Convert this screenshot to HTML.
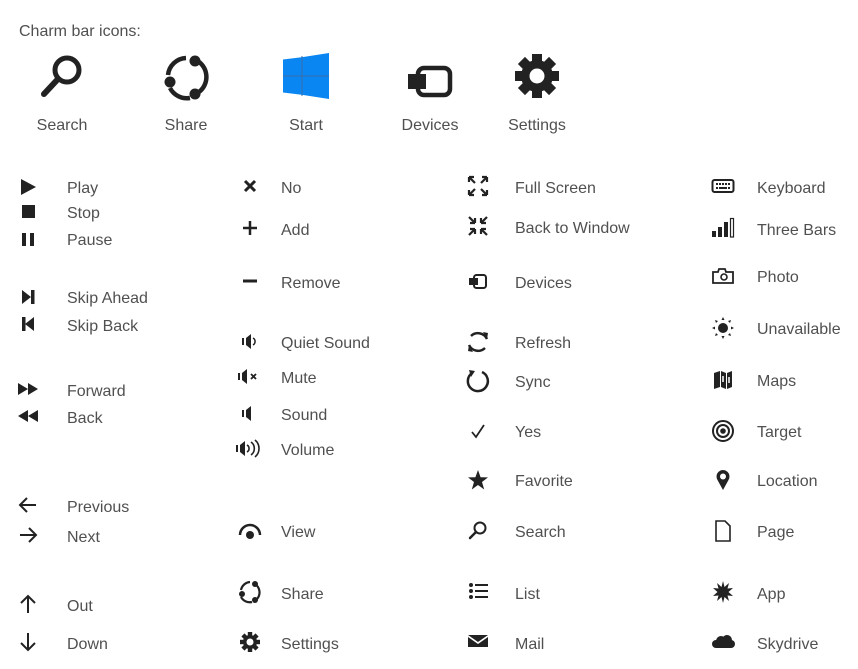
<!DOCTYPE html>
<html><head><meta charset="utf-8"><style>
body{margin:0;width:858px;height:669px;background:#fff;position:relative;overflow:hidden;font-family:"Liberation Sans",sans-serif;color:#505050}
.t{position:absolute;font-size:16px;line-height:20px;white-space:nowrap;margin-top:2px}
.c{position:absolute;font-size:16px;line-height:20px;white-space:nowrap;transform:translateX(-50%);margin-top:1px}
svg{position:absolute;overflow:visible}
.i{width:24px;height:24px}
</style></head><body>
<div class="t" style="left:19px;top:20px">Charm bar icons:</div>

<!-- charm icons -->
<svg style="left:38px;top:52px" width="48" height="48" viewBox="0 0 48 48"><circle cx="29" cy="18" r="12" fill="none" stroke="#222" stroke-width="5"/><line x1="20" y1="27" x2="6" y2="42" stroke="#222" stroke-width="6" stroke-linecap="round"/></svg>
<div class="c" style="left:62px;top:115px">Search</div>
<svg style="left:162px;top:53px" width="48" height="48" viewBox="0 0 48 48"><path d="M34 7 A19 19 0 0 1 37 39" fill="none" stroke="#222" stroke-width="4.5"/><path d="M28 45 A19 19 0 0 1 8 35 M6 22 A19 19 0 0 1 24 5" fill="none" stroke="#222" stroke-width="4.5"/><circle cx="33" cy="8" r="5.5" fill="#222"/><circle cx="8" cy="29" r="5.5" fill="#222"/><circle cx="33" cy="41" r="5.5" fill="#222"/></svg>
<div class="c" style="left:186px;top:115px">Share</div>
<svg style="left:283px;top:53px" width="46" height="46" viewBox="0 0 46 46"><path d="M0 6.5 L18.5 4.3 L18.5 22.5 L0 22.5Z M19.5 4.1 L46 0 L46 22.5 L19.5 22.5Z M0 23.5 L18.5 23.5 L18.5 41.7 L0 39.5Z M19.5 23.5 L46 23.5 L46 46 L19.5 41.9Z" fill="#0a86f3"/><path d="M0 23 H46 M19 3 V43" stroke="#3a6ea8" stroke-width="1"/></svg>
<div class="c" style="left:306px;top:115px">Start</div>
<svg style="left:406px;top:64px" width="48" height="36" viewBox="0 0 48 36"><rect x="12" y="4" width="32" height="27" rx="6" fill="none" stroke="#222" stroke-width="4.5"/><rect x="2" y="10" width="18" height="15" fill="#222"/></svg>
<div class="c" style="left:430px;top:115px">Devices</div>
<svg style="left:514px;top:53px" width="46" height="46" viewBox="-23 -23 46 46"><g fill="#222"><rect x="-5" y="-22" width="10" height="44"/><rect x="-5" y="-22" width="10" height="44" transform="rotate(45)"/><rect x="-5" y="-22" width="10" height="44" transform="rotate(90)"/><rect x="-5" y="-22" width="10" height="44" transform="rotate(135)"/><circle r="16"/></g><circle r="7.5" fill="#fff"/></svg>
<div class="c" style="left:537px;top:115px">Settings</div>

<!-- column 1 -->
<svg class="i" style="left:16px;top:175px" viewBox="0 0 24 24"><path d="M5 4 L20 12 L5 20Z" fill="#222"/></svg><div class="t" style="left:67px;top:177px">Play</div>
<svg class="i" style="left:16px;top:199px" viewBox="0 0 24 24"><rect x="6" y="6" width="13" height="13" fill="#222"/></svg><div class="t" style="left:67px;top:202px">Stop</div>
<svg class="i" style="left:16px;top:227px" viewBox="0 0 24 24"><rect x="6" y="6" width="4" height="13" fill="#222"/><rect x="14" y="6" width="4" height="13" fill="#222"/></svg><div class="t" style="left:67px;top:229px">Pause</div>
<svg class="i" style="left:16px;top:285px" viewBox="0 0 24 24"><path d="M6 5 L15 12 L6 19Z" fill="#222"/><rect x="15" y="5" width="3.5" height="14" fill="#222"/></svg><div class="t" style="left:67px;top:287px">Skip Ahead</div>
<svg class="i" style="left:16px;top:312px" viewBox="0 0 24 24"><path d="M18 5 L9 12 L18 19Z" fill="#222"/><rect x="6" y="5" width="3.5" height="14" fill="#222"/></svg><div class="t" style="left:67px;top:315px">Skip Back</div>
<svg class="i" style="left:16px;top:377px" viewBox="0 0 24 24"><path d="M2 6 L12 12 L2 18Z M12 6 L22 12 L12 18Z" fill="#222"/></svg><div class="t" style="left:67px;top:380px">Forward</div>
<svg class="i" style="left:16px;top:404px" viewBox="0 0 24 24"><path d="M22 6 L12 12 L22 18Z M12 6 L2 12 L12 18Z" fill="#222"/></svg><div class="t" style="left:67px;top:407px">Back</div>
<svg class="i" style="left:16px;top:493px" viewBox="0 0 24 24"><path d="M20 12 H4 M11 5 L4 12 L11 19" fill="none" stroke="#222" stroke-width="2"/></svg><div class="t" style="left:67px;top:496px">Previous</div>
<svg class="i" style="left:16px;top:523px" viewBox="0 0 24 24"><path d="M4 12 H20 M13 5 L20 12 L13 19" fill="none" stroke="#222" stroke-width="2"/></svg><div class="t" style="left:67px;top:526px">Next</div>
<svg class="i" style="left:16px;top:592px" viewBox="0 0 24 24"><path d="M12 21 V4 M5 11 L12 4 L19 11" fill="none" stroke="#222" stroke-width="2"/></svg><div class="t" style="left:67px;top:595px">Out</div>
<svg class="i" style="left:16px;top:630px" viewBox="0 0 24 24"><path d="M12 3 V20 M5 13 L12 20 L19 13" fill="none" stroke="#222" stroke-width="2"/></svg><div class="t" style="left:67px;top:633px">Down</div>

<!-- column 2 -->
<svg class="i" style="left:238px;top:174px" viewBox="0 0 24 24"><path d="M7 7 L17 17 M17 7 L7 17" stroke="#222" stroke-width="3"/></svg><div class="t" style="left:281px;top:177px">No</div>
<svg class="i" style="left:238px;top:216px" viewBox="0 0 24 24"><path d="M12 5 V19 M5 12 H19" stroke="#222" stroke-width="2.5"/></svg><div class="t" style="left:281px;top:219px">Add</div>
<svg class="i" style="left:238px;top:269px" viewBox="0 0 24 24"><path d="M5 12 H19" stroke="#222" stroke-width="3"/></svg><div class="t" style="left:281px;top:272px">Remove</div>
<svg class="i" style="left:238px;top:329px" viewBox="0 0 24 24"><rect x="4" y="9" width="2" height="7" fill="#222"/><path d="M8 9 L13 5 V20 L8 16Z" fill="#222"/><path d="M15 9 A4 4 0 0 1 15 16" fill="none" stroke="#222" stroke-width="1.5"/></svg><div class="t" style="left:281px;top:332px">Quiet Sound</div>
<svg class="i" style="left:238px;top:364px" viewBox="0 0 24 24"><rect x="0" y="9" width="2" height="7" fill="#222"/><path d="M4 9 L9 5 V20 L4 16Z" fill="#222"/><path d="M13 10 L18 15 M18 10 L13 15" stroke="#222" stroke-width="1.8"/></svg><div class="t" style="left:281px;top:367px">Mute</div>
<svg class="i" style="left:238px;top:401px" viewBox="0 0 24 24"><rect x="4" y="9" width="2" height="7" fill="#222"/><path d="M8 9 L13 5 V20 L8 16Z" fill="#222"/></svg><div class="t" style="left:281px;top:404px">Sound</div>
<svg class="i" style="left:238px;top:436px" viewBox="0 0 24 24"><rect x="-2" y="9" width="2" height="7" fill="#222"/><path d="M2 9 L7 5 V20 L2 16Z" fill="#222"/><path d="M9 9 A4 4 0 0 1 9 16 M13 6 A8 8 0 0 1 13 19 M17 4 A11 11 0 0 1 17 21" fill="none" stroke="#222" stroke-width="1.6"/></svg><div class="t" style="left:281px;top:439px">Volume</div>
<svg class="i" style="left:238px;top:518px" viewBox="0 0 24 24"><path d="M2 17 A10 10 0 0 1 22 17" fill="none" stroke="#222" stroke-width="2.5"/><circle cx="12" cy="17" r="4" fill="#222"/></svg><div class="t" style="left:281px;top:521px">View</div>
<svg class="i" style="left:238px;top:580px" viewBox="0 0 24 24"><path d="M17 4 A10 10 0 0 1 19 19 M14 22 A10 10 0 0 1 3 17 M3 10 A10 10 0 0 1 12 2" fill="none" stroke="#222" stroke-width="2.2"/><circle cx="17" cy="4" r="3" fill="#222"/><circle cx="4" cy="14" r="3" fill="#222"/><circle cx="17" cy="20" r="3" fill="#222"/></svg><div class="t" style="left:281px;top:583px">Share</div>
<svg class="i" style="left:238px;top:630px" viewBox="-12 -12 24 24"><g fill="#222"><rect x="-2.2" y="-10" width="4.4" height="20"/><rect x="-2.2" y="-10" width="4.4" height="20" transform="rotate(45)"/><rect x="-2.2" y="-10" width="4.4" height="20" transform="rotate(90)"/><rect x="-2.2" y="-10" width="4.4" height="20" transform="rotate(135)"/><circle r="7"/></g><circle r="3.5" fill="#fff"/></svg><div class="t" style="left:281px;top:633px">Settings</div>

<!-- column 3 -->
<svg class="i" style="left:466px;top:174px" viewBox="0 0 24 24"><path d="M3 3 L9 9 M3 3 H8 M3 3 V8 M21 3 L15 9 M21 3 H16 M21 3 V8 M3 21 L9 15 M3 21 H8 M3 21 V16 M21 21 L15 15 M21 21 H16 M21 21 V16" fill="none" stroke="#222" stroke-width="2.2"/></svg><div class="t" style="left:515px;top:177px">Full Screen</div>
<svg class="i" style="left:466px;top:214px" viewBox="0 0 24 24"><path d="M3 3 L9 9 M9 9 H4 M9 9 V4 M21 3 L15 9 M15 9 H20 M15 9 V4 M3 21 L9 15 M9 15 H4 M9 15 V20 M21 21 L15 15 M15 15 H20 M15 15 V20" fill="none" stroke="#222" stroke-width="2.2"/></svg><div class="t" style="left:515px;top:217px">Back to Window</div>
<svg class="i" style="left:466px;top:270px" viewBox="0 0 24 24"><rect x="8" y="5" width="12" height="13" rx="2.5" fill="none" stroke="#222" stroke-width="2"/><rect x="3" y="8" width="9" height="7" fill="#222"/></svg><div class="t" style="left:515px;top:272px">Devices</div>
<svg class="i" style="left:466px;top:330px" viewBox="0 0 24 24"><path d="M5 6 A10 10 0 0 1 21 9 M19 18 A10 10 0 0 1 3 15" fill="none" stroke="#222" stroke-width="2.5"/><path d="M17 2 L22 3 L21 9Z M7 22 L2 21 L3 15Z" fill="#222"/></svg><div class="t" style="left:515px;top:332px">Refresh</div>
<svg class="i" style="left:466px;top:369px" viewBox="0 0 24 24"><path d="M16 3 A10 10 0 1 1 6 4" fill="none" stroke="#222" stroke-width="2.5"/><path d="M3 1 L9 2 L5 8Z" fill="#222"/></svg><div class="t" style="left:515px;top:371px">Sync</div>
<svg class="i" style="left:466px;top:419px" viewBox="0 0 24 24"><path d="M6 13 L10 18 L18 6" fill="none" stroke="#222" stroke-width="1.8"/></svg><div class="t" style="left:515px;top:421px">Yes</div>
<svg class="i" style="left:466px;top:468px" viewBox="0 0 24 24"><path d="M12 2 L14.6 9.3 L22 9.4 L16 14 L18.2 21.5 L12 17 L5.8 21.5 L8 14 L2 9.4 L9.4 9.3Z" fill="#222"/></svg><div class="t" style="left:515px;top:470px">Favorite</div>
<svg class="i" style="left:466px;top:519px" viewBox="0 0 24 24"><circle cx="14" cy="9" r="5.5" fill="none" stroke="#222" stroke-width="2"/><path d="M10 13 L4 19" stroke="#222" stroke-width="2.5" stroke-linecap="round"/></svg><div class="t" style="left:515px;top:521px">Search</div>
<svg class="i" style="left:466px;top:580px" viewBox="0 0 24 24"><g fill="#222"><circle cx="5" cy="5" r="2"/><circle cx="5" cy="11" r="2"/><circle cx="5" cy="17" r="2"/><rect x="9" y="4" width="13" height="2"/><rect x="9" y="10" width="13" height="2"/><rect x="9" y="16" width="13" height="2"/></g></svg><div class="t" style="left:515px;top:583px">List</div>
<svg class="i" style="left:466px;top:630px" viewBox="0 0 24 24"><path d="M2 5 H22 L12 12Z" fill="#222"/><path d="M2 7 L12 14 L22 7 V17 H2Z" fill="#222"/></svg><div class="t" style="left:515px;top:633px">Mail</div>

<!-- column 4 -->
<svg class="i" style="left:711px;top:174px" viewBox="0 0 24 24"><rect x="1.5" y="6" width="21" height="12" rx="2" fill="none" stroke="#222" stroke-width="2"/><g fill="#222"><rect x="5" y="9" width="2" height="2"/><rect x="8" y="9" width="2" height="2"/><rect x="11" y="9" width="2" height="2"/><rect x="14" y="9" width="2" height="2"/><rect x="17" y="9" width="2" height="2"/><rect x="5" y="13" width="2" height="2"/><rect x="8" y="13" width="8" height="2"/><rect x="17" y="13" width="2" height="2"/></g></svg><div class="t" style="left:757px;top:177px">Keyboard</div>
<svg class="i" style="left:711px;top:216px" viewBox="0 0 24 24"><g fill="#222"><rect x="1" y="15" width="4" height="6"/><rect x="7" y="11" width="4" height="10"/><rect x="13" y="6" width="4" height="15"/></g><rect x="19.5" y="2.5" width="3" height="18.5" fill="none" stroke="#222" stroke-width="1.2"/></svg><div class="t" style="left:757px;top:219px">Three Bars</div>
<svg class="i" style="left:711px;top:264px" viewBox="0 0 24 24"><path d="M2 8 H7 L8 5 H14 L15 8 H22 V19 H2Z" fill="none" stroke="#222" stroke-width="1.8"/><circle cx="13" cy="13" r="3" fill="none" stroke="#222" stroke-width="1.6"/></svg><div class="t" style="left:757px;top:266px">Photo</div>
<svg class="i" style="left:711px;top:316px" viewBox="0 0 24 24"><circle cx="12" cy="12" r="5" fill="#222"/><g fill="#222"><path d="M12 1 L13.5 4 H10.5Z"/><path d="M12 23 L13.5 20 H10.5Z"/><path d="M1 12 L4 10.5 V13.5Z"/><path d="M23 12 L20 10.5 V13.5Z"/><path d="M4 4 L7 5 L5 7Z"/><path d="M20 4 L17 5 L19 7Z"/><path d="M4 20 L7 19 L5 17Z"/><path d="M20 20 L17 19 L19 17Z"/></g></svg><div class="t" style="left:757px;top:318px">Unavailable</div>
<svg class="i" style="left:711px;top:368px" viewBox="0 0 24 24"><path d="M3 5 L9 3 V19 L3 21Z M10 3 L15 5 V21 L10 19Z M16 5 L21 3 V19 L16 21Z" fill="#222"/><path d="M12 8 V14 M18 9 V15" stroke="#fff" stroke-width="1.5"/></svg><div class="t" style="left:757px;top:370px">Maps</div>
<svg class="i" style="left:711px;top:419px" viewBox="0 0 24 24"><circle cx="12" cy="12" r="10" fill="none" stroke="#222" stroke-width="2"/><circle cx="12" cy="12" r="6" fill="none" stroke="#222" stroke-width="2"/><circle cx="12" cy="12" r="2.8" fill="#222"/></svg><div class="t" style="left:757px;top:421px">Target</div>
<svg class="i" style="left:711px;top:468px" viewBox="0 0 24 24"><path d="M12 22 L6.5 12 A6.5 6.5 0 1 1 17.5 12Z" fill="#222"/><circle cx="12" cy="8.5" r="3" fill="#fff"/></svg><div class="t" style="left:757px;top:470px">Location</div>
<svg class="i" style="left:711px;top:519px" viewBox="0 0 24 24"><path d="M5 2 H14 L19 7 V22 H5Z" fill="none" stroke="#222" stroke-width="1.6"/></svg><div class="t" style="left:757px;top:521px">Page</div>
<svg class="i" style="left:711px;top:580px" viewBox="0 0 24 24"><path d="M12 1 L13.5 7 L18 3 L16.5 8.5 L22 8 L17.5 12 L22 16 L16.5 15.5 L18 21 L13.5 17 L12 23 L10.5 17 L6 21 L7.5 15.5 L2 16 L6.5 12 L2 8 L7.5 8.5 L6 3 L10.5 7Z" fill="#222"/></svg><div class="t" style="left:757px;top:583px">App</div>
<svg class="i" style="left:711px;top:630px" viewBox="0 0 24 24"><g fill="#222"><circle cx="5" cy="14" r="4"/><circle cx="10" cy="11" r="5"/><circle cx="16" cy="10" r="5"/><circle cx="20" cy="14" r="4"/><rect x="5" y="12" width="15" height="6"/></g></svg><div class="t" style="left:757px;top:633px">Skydrive</div>
</body></html>
